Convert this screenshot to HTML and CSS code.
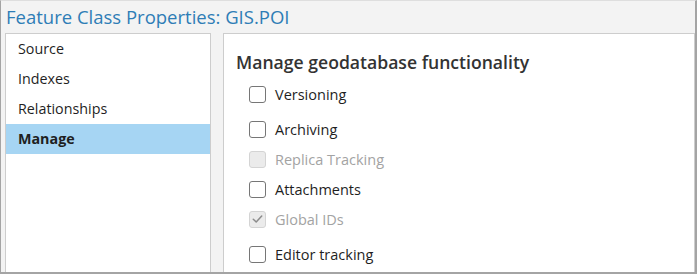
FILE: index.html
```html
<!DOCTYPE html>
<html>
<head>
<meta charset="utf-8">
<link rel="stylesheet" href="styles.css">
</head>
<body>
<div class="window">
  <div class="title">Feature Class Properties: GIS.POI</div>
  <div class="panels">
    <ul class="nav">
      <li class="nav-item">Source</li>
      <li class="nav-item">Indexes</li>
      <li class="nav-item">Relationships</li>
      <li class="nav-item selected">Manage</li>
    </ul>
    <div class="content">
      <div class="heading">Manage geodatabase functionality</div>
      <div class="options">
        <label class="option gap-lg"><span class="box"></span><span class="label">Versioning</span></label>
        <label class="option"><span class="box"></span><span class="label">Archiving</span></label>
        <label class="option disabled"><span class="box"></span><span class="label">Replica Tracking</span></label>
        <label class="option"><span class="box"></span><span class="label">Attachments</span></label>
        <label class="option disabled gap-lg"><span class="box checked"><svg viewBox="0 0 16 16" width="16" height="16"><path d="M3.5 8.2 L6.6 11.2 L12.5 4.8" fill="none" stroke="#8c8c8c" stroke-width="1.6" stroke-linecap="round" stroke-linejoin="round"/></svg></span><span class="label">Global IDs</span></label>
        <label class="option"><span class="box"></span><span class="label">Editor tracking</span></label>
      </div>
    </div>
  </div>
</div>
</body>
</html>
```
FILE: styles.css
```css
html, body {
  margin: 0;
  padding: 0;
  background: #ffffff;
}
body {
  font-family: "Open Sans", "Noto Sans", "Liberation Sans", sans-serif;
}
.window {
  box-sizing: border-box;
  width: 697px;
  height: 274px;
  background: #f3f3f3;
  border-top: 1px solid #dedede;
  border-left: 1px solid #a4a4a4;
  border-right: 2px solid #a4a4a4;
  border-bottom: 2px solid #a4a4a4;
  padding: 0 0 0 4px;
  display: flex;
  flex-direction: column;
  overflow: hidden;
}
.title {
  height: 32px;
  padding-left: 1px;
  font-size: 18.5px;
  line-height: 32px;
  color: #2e7db6;
  white-space: nowrap;
}
.panels {
  flex: 1;
  display: flex;
  gap: 12px;
  min-height: 0;
}
.nav {
  list-style: none;
  margin: 0;
  padding: 0;
  width: 206px;
  box-sizing: border-box;
  background: #ffffff;
  border: 1px solid #cdcdcd;
  border-bottom: none;
}
.nav-item {
  height: 30px;
  line-height: 30px;
  padding-left: 12px;
  font-size: 14.3px;
  color: #1f1f1f;
}
.nav-item.selected {
  background: #a6d5f3;
  font-weight: 700;
}
.content {
  flex: 1;
  background: #ffffff;
  border: 1px solid #cdcdcd;
  border-bottom: none;
  padding: 17px 0 0 12px;
}
.heading {
  font-size: 17.6px;
  font-weight: 600;
  color: #333333;
  line-height: 22px;
}
.options {
  display: flex;
  flex-direction: column;
  padding-left: 13px;
  margin-top: 11px;
}
.option {
  display: flex;
  align-items: center;
  gap: 9px;
  height: 20px;
  margin-bottom: 10px;
  font-size: 14.5px;
  color: #1f1f1f;
}
.option.gap-lg {
  margin-bottom: 15px;
}
.box {
  box-sizing: border-box;
  width: 17px;
  height: 17px;
  border: 1px solid #767676;
  border-radius: 3px;
  background: #ffffff;
  display: flex;
  align-items: center;
  justify-content: center;
}
.option.disabled {
  color: #a3a3a3;
}
.option.disabled .box {
  border-color: #d4d4d4;
  background: #ebebeb;
}
```
